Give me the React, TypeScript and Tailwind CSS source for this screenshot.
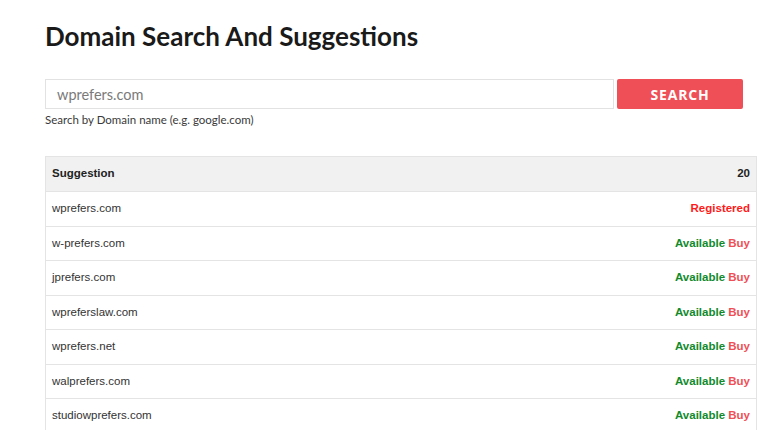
import { useState } from "react";

const rows = [
  { name: "wprefers.com", registered: true },
  { name: "w-prefers.com", registered: false },
  { name: "jprefers.com", registered: false },
  { name: "wpreferslaw.com", registered: false },
  { name: "wprefers.net", registered: false },
  { name: "walprefers.com", registered: false },
  { name: "studiowprefers.com", registered: false },
];

export default function App() {
  const [query, setQuery] = useState("");

  return (
    <div className="w-[768px] h-[430px] overflow-hidden bg-white px-[45px] pt-[19px] font-['Lato',sans-serif]">
      <h1 className="text-[26px] font-bold leading-[34px] text-[#1a1a1a]">
        Domain Search And Suggestions
      </h1>

      <div className="mt-[26px] flex gap-[3px] w-[698px]">
        <input
          value={query}
          onChange={(e) => setQuery(e.target.value)}
          placeholder="wprefers.com"
          className="h-[30px] flex-1 border border-[#e2e2e2] bg-white px-[11px] text-[14.5px] text-[#333] placeholder:text-[#7a7a7a] outline-none"
        />
        <button className="h-[30px] w-[126px] rounded-[2px] bg-[#ef4f56] text-[14px] font-bold tracking-[0.06em] text-white font-['Open_Sans',sans-serif]">
          SEARCH
        </button>
      </div>
      <p className="mt-[3px] text-[11.5px] leading-[16px] text-[#3a3a3a]">
        Search by Domain name (e.g. google.com)
      </p>

      <div className="mt-[28px] w-[712px] border border-[#e4e4e4] font-['Liberation_Sans',Arial,sans-serif] text-[11.5px]">
        <div className="flex h-[34px] items-center justify-between bg-[#f1f1f1] px-[6px] font-bold text-[#222]">
          <span>Suggestion</span>
          <span>20</span>
        </div>
        {rows.map((r) => (
          <div
            key={r.name}
            className="flex h-[34.5px] items-center justify-between border-t border-[#e4e4e4] px-[6px] text-[#333]"
          >
            <span>{r.name}</span>
            {r.registered ? (
              <span className="font-bold text-[#ff1a1a]">Registered</span>
            ) : (
              <span className="font-bold">
                <span className="text-[#118a2c]">Available</span>{" "}
                <span className="text-[#ef4f56]">Buy</span>
              </span>
            )}
          </div>
        ))}
      </div>
    </div>
  );
}
